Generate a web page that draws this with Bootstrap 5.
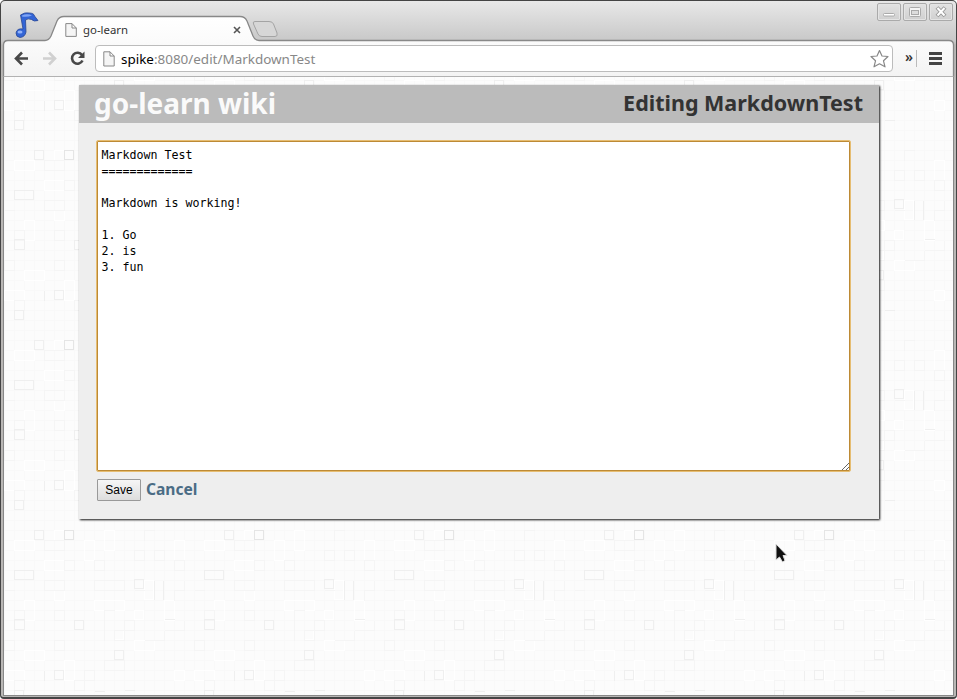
<!DOCTYPE html>
<html lang="en"><head><meta charset="utf-8"><title>go-learn</title>
<link href="https://cdn.jsdelivr.net/npm/bootstrap@5.3.0/dist/css/bootstrap.min.css" rel="stylesheet">
<style>
html,body{height:100%}
body{overflow:hidden;background:#fff;font-family:"Noto Sans","Open Sans",sans-serif;color:#333}
.win{height:699px;background:linear-gradient(#e8e8e8,#c8c8c8 40px,#b9b7b5 44px);border:1px solid #444;border-bottom-width:2px;border-radius:5px 5px 4px 4px}
.frame-art{left:-1px;top:-1px;pointer-events:none}
.tabstrip{height:40px;padding:2px 3px 0 13px}
.note{margin-top:8px}
.tab-item{width:176px;margin-left:26px;padding-top:13px}
.tabname{font-size:11.4px;line-height:28px;margin-left:6px}
.newtab{margin:16px 0 0 10px}
.winbtns{gap:2px}
.winbtn{width:24px;height:18px;border:1px solid #aaa;border-radius:2px;background:linear-gradient(#e2e2e2,#d0d0d0);box-shadow:inset 0 0 0 1px #e4e4e4}
.tool{height:35px;padding-left:12px}
.omni{width:798px;height:27px;margin-left:9px;border:1px solid #bcbcbc;border-radius:4px;background:#fff;padding:0 3px 0 7px;font-size:13.45px;color:#888}
.omni b{font-weight:400;color:#000}
.address{margin-left:6px;padding-top:2px}
.more{font-size:14px;font-weight:600;line-height:20px;margin:-3px 0 0 12px;width:8px}
.view{height:620px;margin:0 2px 0 2px;background:#fcfcfc;border:1px solid #888;border-top-color:#b2b2b2;padding:8px 0 0 75px}
.texture{left:0;top:0}
.wiki{width:800px;height:434px;background:#eee;box-shadow:1px 1px 2px #111}
.bar{height:38px;background:#bbb;padding:0 16px 0 15px}
.brand{font-size:28px;line-height:36px;font-weight:700;color:#fafafa}
.heading{font-size:21.5px;line-height:36px;font-weight:700}
.edit{display:block;width:755px;height:332px;margin:17px 0 0 17px;border:1px solid #e6bd72;border-radius:2px;box-shadow:inset 0 0 0 1px #bd8a35;outline:0;background:#fff;color:#000;padding:6px 4px 6px 4.6px;font:11.63px/16px "DejaVu Sans Mono",monospace}
.actions{margin:7px 0 0 18px;gap:5px}
.save{width:44px;height:22px;border:1px solid #999;background:linear-gradient(#f6f6f6,#ddd);font:12px "Liberation Sans",sans-serif;padding:0;color:#000;border-radius:1px}
.cancel{font-size:15.6px;font-weight:700;color:#4b6c85;text-decoration:none;line-height:20px}
.pointer-art{left:774px;top:542px}
</style></head><body>
<div class="win position-relative">
<svg class="frame-art position-absolute" width="957" height="77" fill="none"><defs><linearGradient id="tb" x2="0" y2="1"><stop stop-color="#fff"/><stop offset=".4" stop-color="#fbfbfb"/><stop offset="1" stop-color="#f3f3f3"/></linearGradient></defs>
<path d="M3.5 77V45Q3.5 40.5 8 40.5H45C49 40.5 50 38 51 36L57 21Q59 16.500 64 16.500H240Q245 16.500 247 21L253 36Q255 40.500 259 40.500H949Q953.500 40.500 953.500 45V77" fill="url(#tb)" stroke="#888" stroke-width="1.3"/></svg>
<div class="tabstrip d-flex position-relative">
<svg class="note" width="25" height="28" viewBox="14 11 25 28"><path d="M20.500 15Q25 12 29 13Q34 13 34.500 16L38 20.500Q34 22 31.500 19.500Q28 18 25.500 20L26 32Q25 37 20 37.500Q16 37 16 33Q17 28 23 29Z" fill="#3365d6" stroke="#2b4793" stroke-width=".8"/><path d="M22 15.500Q27 13 32 15.500Q27 17.500 22 16.500Z" fill="#80a5f5"/><ellipse cx="20" cy="32" rx="2.500" ry="1.500" fill="#91b2fa"/></svg>
<div class="tab-item d-flex align-items-center align-self-start"><svg width="12" height="14" viewBox="0 0 12 14"><path d="M.8.6H7L11.300 5V13.400H.8ZM7 .6V5H11.300" fill="#f5f5f5" stroke="#888"/></svg><span class="tabname">go-learn</span><svg class="ms-auto" width="8" height="8"><path d="M1 1L7 7M7 1L1 7" stroke="#555" stroke-width="1.600"/></svg></div>
<svg class="newtab" width="29" height="19"><path d="M4 2.500H18Q21.500 2.500 22.500 5L26 14Q27 17.500 24 17.500H11Q8 17.500 7 15L2.500 5Q1.500 2.500 4 2.500Z" fill="#d7d7d7" stroke="#a4a4a4"/></svg>
<div class="winbtns d-flex ms-auto"><div class="winbtn"><svg class="d-block" width="22" height="16"><rect x="5.500" y="9.500" width="11" height="2.500" rx="1" fill="#fff" stroke="#aaa"/></svg></div><div class="winbtn"><svg class="d-block" width="22" height="16" fill="none" stroke="#aaa"><rect x="5.500" y="3.500" width="11" height="9" rx="1" fill="#f4f4f4"/><rect x="7.500" y="6.500" width="7" height="4" fill="#ddd"/></svg></div><div class="winbtn"><svg class="d-block" width="22" height="16"><path d="M7 3.500L15 12M15 3.500L7 12" stroke="#999" stroke-width="4"/><path d="M7.500 4L14.500 11.500M14.500 4L7.500 11.500" stroke="#fff" stroke-width="2"/></svg></div></div>
</div>
<div class="tool d-flex align-items-center position-relative">
<svg width="73" height="20" viewBox="13 48.500 73 20" fill="none" stroke="#484848" stroke-width="2.600"><path d="M28 58H16M22 52L16 58L22 64"/><path d="M43 58H55M49 52L55 58L49 64" stroke="#d0d0d0"/><path d="M82 54.500A5.500 5.500 0 1 0 82.500 60"/><path d="M84.500 51V57.500H78Z" fill="#484848" stroke="none"/></svg>
<div class="omni d-flex align-items-center"><svg width="12" height="16" viewBox="0 0 12 16"><path d="M.8.8H7L11.200 5V15H.8ZM7 .8V5H11.200" fill="#f5f5f5" stroke="#888"/></svg><span class="address"><b>spike</b>:8080/edit/MarkdownTest</span><svg class="ms-auto" width="20" height="20"><path d="M10.500 1.500L13 7L19 7.500L14.500 11.800L16 17.800L10.500 14.800L5 17.800L6.500 11.800L2 7.500L8 7Z" fill="#fff" stroke="#888" stroke-width="1.200" stroke-linejoin="round"/></svg></div>
<span class="more">»</span>
<svg width="28" height="20" viewBox="912 49 28 20" overflow="visible"><path d="M915.500 50V67" stroke="#bbb"/><path d="M928 53.500H941M928 58.500H941M928 63.500H941" stroke="#444" stroke-width="3"/></svg>
</div>
<div class="view position-relative">
<svg class="texture position-absolute" width="949" height="618" viewBox="4 77 949 618" fill="none" shape-rendering="crispEdges"><defs>
<pattern id="cells" width="10" height="10" x="4" y="520" patternUnits="userSpaceOnUse"><path d="M0 .5H10M.5 0V10" stroke="#f9f9f9"/></pattern>
<pattern id="squares" width="190" height="190" x="4" y="520" patternUnits="userSpaceOnUse"><g transform="translate(-3.500 -519.500)">
<path stroke="#fff" d="M14 540h20v10h-20zM54 530h10v10h-10zM84 540h10v20h-10zM44 560h20v10h-20zM144 580h9v19h-9zM94 600h30v10h-30zM24 600h10v20h-10zM54 590h10v10h-10zM114 630h9v9h-9zM164 600h10v20h-10zM24 650h20v10h-20zM134 610h9v9h-9zM4 670h20v10h-20zM174 670h10v10h-10zM134 640h20v10h-20zM64 660h10v20h-10zM104 530h10v20h-10zM174 540h10v20h-10z"/>
<path stroke="#f5f5f5" d="M44 550h20v-10h-20zM64 560h10v10h-10zM134 550h10v10h-10zM154 550h10v10h-10zM94 560h10v10h-10zM94 580h30v10h-30zM44 580h20v10h-20zM54 610h10v10h-10zM14 610h10v10h-10zM114 630h10v10h-10zM54 640h10v10h-10zM104 660h20v10h-20zM84 670h10v10h-10zM14 680h10v10h-10zM74 680h10v10h-10zM124 620h10v10h-10zM174 560h10v10h-10zM4 640h10v10h-10zM164 630h20v-10M144 640h20v-10M104 640v-30h10M4 590h10M134 590h10M154 530h-10v10M184 580v10h-10v10"/>
<path stroke="#efefef" d="M34 530h9v9h-9zM14 570h19v9h-19zM14 619h10v10h-10zM74 620h9v9h-9zM134 579h9v9h-9zM154 599v-19M163 580v19M114 650h9v9h-9zM54 670h9v9h-9zM14 690h9v9h-9zM124 690h10M94 691h10M164 619h10M44 680v-10"/>
<path stroke="#e5e5e5" d="M64 530h9v9h-9z"/></g></pattern></defs>
<rect x="4" y="77" width="949" height="618" fill="url(#cells)"/><rect x="4" y="77" width="949" height="618" fill="url(#squares)"/></svg>
<main class="wiki position-relative"><header class="bar d-flex justify-content-between"><span class="brand">go-learn wiki</span><span class="heading">Editing MarkdownTest</span></header>
<textarea class="edit" spellcheck="false">Markdown Test
=============

Markdown is working!

1. Go
2. is
3. fun</textarea><div class="actions d-flex"><button class="save">Save</button><a class="cancel" href="#">Cancel</a></div></main></div>
<svg class="pointer-art position-absolute" width="16" height="22"><path d="M1 1V17L4.500 14L7.500 19L10 17.500L8 12.500H12Z" fill="#111" stroke="#ddd"/></svg>
</div>
<script src="https://cdn.jsdelivr.net/npm/bootstrap@5.3.0/dist/js/bootstrap.bundle.min.js"></script>
</body></html>
